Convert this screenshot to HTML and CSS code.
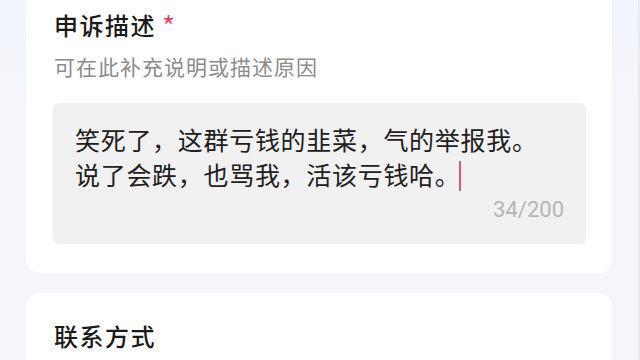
FILE: index.html
```html
<!DOCTYPE html>
<html lang="zh-CN">
<head>
<meta charset="utf-8">
<link rel="stylesheet" href="styles.css">
</head>
<body>
<div class="page">
  <section class="card card-desc">
    <h2 class="title">申诉描述<span class="req">*</span></h2>
    <p class="hint">可在此补充说明或描述原因</p>
    <div class="textbox">
      <p class="content">笑死了，这群亏钱的韭菜，气的举报我。<br>说了会跌，也骂我，活该亏钱哈。<span class="caret"></span></p>
      <div class="counter">34/200</div>
    </div>
  </section>
  <section class="card card-contact">
    <h2 class="title">联系方式</h2>
  </section>
</div>
</body>
</html>
```
FILE: styles.css
```css
html, body {
  margin: 0;
  padding: 0;
  height: 100%;
  overflow: hidden;
}
body {
  background: #f5f6f9;
  font-family: "Noto Sans CJK SC", "Noto Sans", sans-serif;
  color: #1f1f1f;
}
.page {
  padding: 0 26px;
  border-right: 2px solid #e9eaee;
  box-sizing: border-box;
  width: 640px;
  height: 360px;
  overflow: hidden;
  background: linear-gradient(#f1f4fc, #f5f6f9 120px);
}
.card {
  background: #ffffff;
  border-radius: 14px;
  padding: 0 26px 0 28px;
}
.card-desc {
  margin-top: -20px;
  padding-top: 30px;
  padding-bottom: 29px;
}
.title {
  margin: 0;
  font-size: 24px;
  line-height: 30px;
  font-weight: 500;
  letter-spacing: 1.5px;
  color: #1a1a1a;
}
.req {
  color: #e8416a;
  margin-left: 6px;
  font-size: 28px;
  line-height: 20px;
  font-weight: 400;
  vertical-align: -2px;
}
.hint {
  margin: 12px 0 0 0;
  font-size: 21px;
  line-height: 28px;
  letter-spacing: 1px;
  color: #8c8c8c;
}
.textbox {
  margin-top: 23px;
  margin-left: -1px;
  background: #f1f1f1;
  border-radius: 6px;
  padding: 19px 22px 22px 22px;
  height: 141px;
  box-sizing: border-box;
  display: flex;
  flex-direction: column;
}
.content {
  margin: 0;
  font-size: 25px;
  line-height: 35px;
  letter-spacing: 0.7px;
  color: #202020;
}
.caret {
  display: inline-block;
  width: 2px;
  height: 30px;
  background: #e0557c;
  vertical-align: -6px;
  margin-left: -2px;
}
.counter {
  margin-top: auto;
  align-self: flex-end;
  font-family: Roboto, "Noto Sans", sans-serif;
  font-size: 22px;
  line-height: 24px;
  color: #b5b5b5;
}
.card-contact {
  margin-top: 20px;
  padding-top: 28px;
  height: 80px;
}
```
